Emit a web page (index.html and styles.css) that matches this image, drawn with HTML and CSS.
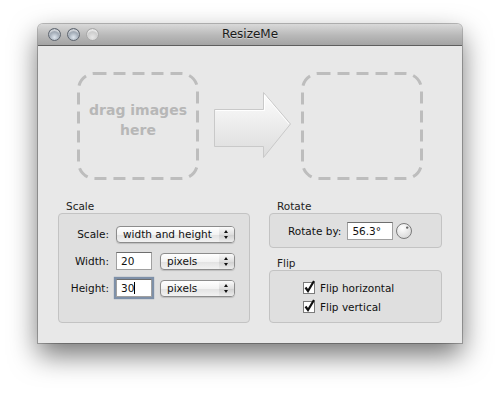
FILE: index.html
```html
<!DOCTYPE html>
<html>
<head>
<meta charset="utf-8">
<link rel="stylesheet" href="styles.css">
</head>
<body>
<div class="window">
  <div class="titlebar">
    <div class="lights">
      <span class="light"></span>
      <span class="light"></span>
      <span class="light off"></span>
    </div>
    <div class="title">ResizeMe</div>
  </div>
  <div class="content">
    <div class="drop-row">
      <div class="dropzone">
        <svg class="dash" width="122" height="108" viewBox="0 0 122 108"><rect x="1.5" y="1.5" width="119" height="105" rx="16" ry="16" fill="none" stroke="#bdbdbd" stroke-width="3" stroke-dasharray="12 7"/></svg>
        <div class="drop-text">drag images<br>here</div>
      </div>
      <svg class="arrow" width="101" height="108" viewBox="0 0 101 108">
        <defs>
          <linearGradient id="ag" x1="0" y1="0" x2="0" y2="1">
            <stop offset="0" stop-color="#fdfdfd"/>
            <stop offset="1" stop-color="#dcdcdc"/>
          </linearGradient>
        </defs>
        <path d="M14.5 37.5 H63.5 V20.5 L90.5 52 L63.5 85.5 V74.5 H14.5 Z" fill="url(#ag)" stroke="#c9c9c9" stroke-width="1"/>
        <path d="M15.5 38.5 H64.5 V23 L89 52" fill="none" stroke="#ffffff" stroke-width="1"/>
      </svg>
      <div class="dropzone">
        <svg class="dash" width="122" height="108" viewBox="0 0 122 108"><rect x="1.5" y="1.5" width="119" height="105" rx="16" ry="16" fill="none" stroke="#bdbdbd" stroke-width="3" stroke-dasharray="12 7"/></svg>
      </div>
    </div>
    <div class="groups">
      <div class="col-left">
        <div class="group-label">Scale</div>
        <div class="box scale-box">
          <div class="label">Scale:</div>
          <div class="popup wide"><span>width and height</span><i class="arrows"></i></div>
          <div class="label">Width:</div>
          <div class="pair">
            <div class="field">20</div>
            <div class="popup narrow"><span>pixels</span><i class="arrows"></i></div>
          </div>
          <div class="label">Height:</div>
          <div class="pair">
            <div class="field focus">30<span class="caret"></span></div>
            <div class="popup narrow"><span>pixels</span><i class="arrows"></i></div>
          </div>
        </div>
      </div>
      <div class="col-right">
        <div class="group-label">Rotate</div>
        <div class="box rotate-box">
          <span class="rlabel">Rotate by:</span>
          <div class="field rfield">56.3°</div>
          <svg class="knob" width="18" height="18" viewBox="0 0 18 18">
            <defs>
              <radialGradient id="kg" cx="0.4" cy="0.3" r="0.8">
                <stop offset="0" stop-color="#ffffff"/>
                <stop offset="1" stop-color="#d4d4d4"/>
              </radialGradient>
            </defs>
            <circle cx="9" cy="9" r="7.5" fill="url(#kg)" stroke="#7a7a7a" stroke-width="1"/>
            <circle cx="12.2" cy="5.6" r="1.2" fill="#666"/>
          </svg>
        </div>
        <div class="group-label flip-label">Flip</div>
        <div class="box flip-box">
          <div class="check-row"><svg class="check" width="13" height="14" viewBox="0 0 13 14"><rect x="0.5" y="2.5" width="11" height="11" fill="#fff" stroke="#7b7b7b"/><path d="M2.5 7.5 L5 11 L11 1" fill="none" stroke="#111" stroke-width="2.2"/></svg><span>Flip horizontal</span></div>
          <div class="check-row"><svg class="check" width="13" height="14" viewBox="0 0 13 14"><rect x="0.5" y="2.5" width="11" height="11" fill="#fff" stroke="#7b7b7b"/><path d="M2.5 7.5 L5 11 L11 1" fill="none" stroke="#111" stroke-width="2.2"/></svg><span>Flip vertical</span></div>
        </div>
      </div>
    </div>
  </div>
</div>
</body>
</html>
```
FILE: styles.css
```css
html, body {
  margin: 0;
  padding: 0;
  background: #ffffff;
}
body {
  width: 500px;
  height: 397px;
  overflow: hidden;
  font-family: "DejaVu Sans", "Liberation Sans", sans-serif;
  font-size: 10.5px;
  color: #111;
}
.window {
  margin: 24px 0 0 38px;
  width: 424px;
  height: 319px;
  border-radius: 5px 5px 0 0;
  box-shadow: 0 0 0 1px rgba(0,0,0,0.25), 0 12px 28px rgba(0,0,0,0.55);
  background: #e8e8e8;
  display: flex;
  flex-direction: column;
}
.titlebar {
  height: 21px;
  border-bottom: 1px solid #5e5e5e;
  border-radius: 5px 5px 0 0;
  background: linear-gradient(#d9d9d9, #b8b8b8 55%, #a4a4a4);
  display: flex;
  align-items: center;
  position: relative;
}
.lights {
  display: flex;
  gap: 6px;
  padding-left: 10px;
}
.light {
  width: 13px;
  height: 13px;
  border-radius: 50%;
  box-sizing: border-box;
  border: 1px solid #5f6670;
  background: radial-gradient(circle at 50% 75%, #dfe6ee 0%, #a9b2bd 45%, #6c7480 100%);
  box-shadow: inset 0 2px 1px rgba(255,255,255,0.6);
}
.light.off {
  border-color: #a9a9a9;
  background: radial-gradient(circle at 50% 75%, #e6e6e6 0%, #cfcfcf 50%, #b7b7b7 100%);
}
.title {
  position: absolute;
  left: 0;
  right: 0;
  top: 0;
  line-height: 21px;
  text-align: center;
  font-size: 12px;
  color: #1a1a1a;
  text-shadow: 0 1px 0 rgba(255,255,255,0.4);
}
.content {
  flex: 1;
  padding: 26px 20px 20px 20px;
  display: flex;
  flex-direction: column;
}
.drop-row {
  display: flex;
  justify-content: space-between;
  padding: 0 19px;
  height: 108px;
}
.dropzone {
  width: 122px;
  height: 108px;
  position: relative;
  display: flex;
  align-items: center;
  justify-content: center;
}
.dash {
  position: absolute;
  left: 0;
  top: 0;
}
.drop-text {
  font-weight: bold;
  font-size: 14px;
  line-height: 20px;
  color: #b7b7b7;
  text-align: center;
  margin-top: -12px;
}
.groups {
  display: flex;
  gap: 19px;
  margin-top: 20px;
}
.col-left {
  width: 192px;
}
.col-right {
  width: 173px;
  display: flex;
  flex-direction: column;
}
.group-label {
  height: 13px;
  line-height: 13px;
  padding-left: 8px;
  color: #222;
}
.flip-label {
  margin-top: 9px;
}
.box {
  box-sizing: border-box;
  border: 1px solid #c3c3c3;
  border-radius: 4px;
  background: #dfdfdf;
}
.scale-box {
  height: 110px;
  display: grid;
  grid-template-columns: 50px auto;
  grid-auto-rows: 18px;
  column-gap: 7px;
  row-gap: 9px;
  padding-top: 11px;
  align-items: center;
}
.label {
  text-align: right;
}
.pair {
  display: flex;
  align-items: center;
  gap: 8px;
}
.popup {
  box-sizing: border-box;
  height: 17px;
  border: 1px solid #8c8c8c;
  border-radius: 4px;
  background: linear-gradient(#ffffff, #f3f3f3 50%, #e2e2e2 51%, #f2f2f2);
  box-shadow: 0 1px 1px rgba(0,0,0,0.15);
  display: flex;
  align-items: center;
  position: relative;
  padding-left: 6px;
}
.popup.wide {
  width: 119px;
}
.popup.narrow {
  width: 75px;
}
.arrows {
  position: absolute;
  right: 0;
  top: 0;
  bottom: 0;
  width: 15px;
  border-radius: 0 3px 3px 0;
  background: linear-gradient(#fafafa, #dedede 50%, #cfcfcf 51%, #ececec);
}
.arrows::before,
.arrows::after {
  content: "";
  position: absolute;
  left: 5px;
  border-left: 2.5px solid transparent;
  border-right: 2.5px solid transparent;
}
.arrows::before {
  top: 3px;
  border-bottom: 3.5px solid #111;
}
.arrows::after {
  bottom: 3px;
  border-top: 3.5px solid #111;
}
.field {
  box-sizing: border-box;
  width: 36px;
  height: 18px;
  background: #fff;
  border: 1px solid #a0a0a0;
  border-top-color: #6e6e6e;
  padding-left: 4px;
  line-height: 16px;
  display: flex;
  align-items: center;
}
.field.focus {
  box-shadow: 0 0 1px 2px #7e90a8;
}
.caret {
  display: inline-block;
  width: 1px;
  height: 12px;
  background: #000;
}
.rotate-box {
  height: 35px;
  display: flex;
  align-items: center;
  padding-left: 18px;
}
.rlabel {
  margin-right: 6px;
}
.rfield {
  width: 46px;
}
.knob {
  margin-left: 2px;
}
.flip-box {
  height: 53px;
  padding: 9px 0 0 33px;
  display: flex;
  flex-direction: column;
  gap: 3px;
}
.check-row {
  height: 16px;
  display: flex;
  align-items: center;
  gap: 4px;
}
.check {
  margin-top: -2px;
}
```
